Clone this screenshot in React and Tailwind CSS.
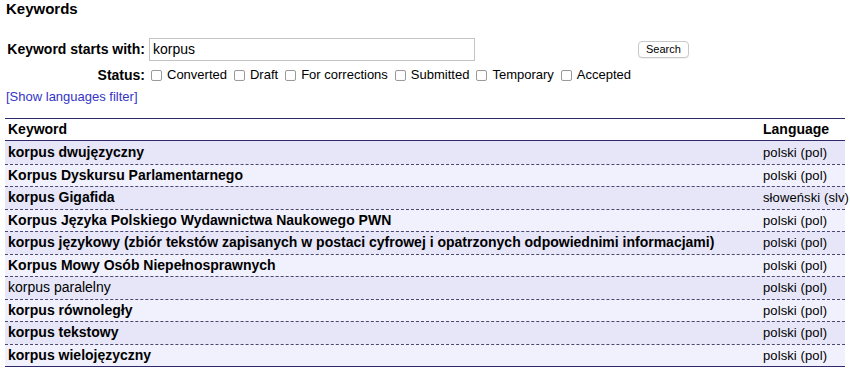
import React from 'react';

const statuses = ['Converted', 'Draft', 'For corrections', 'Submitted', 'Temporary', 'Accepted'];

const keywords = [
    { name: 'korpus dwujęzyczny', lang: 'polski (pol)', bold: true },
    { name: 'Korpus Dyskursu Parlamentarnego', lang: 'polski (pol)', bold: true },
    { name: 'korpus Gigafida', lang: 'słoweński (slv)', bold: true },
    { name: 'Korpus Języka Polskiego Wydawnictwa Naukowego PWN', lang: 'polski (pol)', bold: true },
    { name: 'korpus językowy (zbiór tekstów zapisanych w postaci cyfrowej i opatrzonych odpowiednimi informacjami)', lang: 'polski (pol)', bold: true },
    { name: 'Korpus Mowy Osób Niepełnosprawnych', lang: 'polski (pol)', bold: true },
    { name: 'korpus paralelny', lang: 'polski (pol)', bold: false },
    { name: 'korpus równoległy', lang: 'polski (pol)', bold: true },
    { name: 'korpus tekstowy', lang: 'polski (pol)', bold: true },
    { name: 'korpus wielojęzyczny', lang: 'polski (pol)', bold: true },
];

const Box = () => (
    <span className="inline-block w-[11px] h-[11px] border border-[#9a9a9a] rounded-[2px] bg-white mr-[5px]" />
);

const App = () => {
    return (
        <div className="w-[850px] h-[369px] bg-white text-black font-['Liberation_Sans',Arial,sans-serif] overflow-hidden">
            <h1 className="text-[15px] font-bold leading-[18px] pl-[6px]">Keywords</h1>

            {/* Search form */}
            <div className="mt-[20px]">
                <div className="flex items-center h-[22px]">
                    <div className="w-[145px] text-right text-[14px] font-bold">Keyword starts with:</div>
                    <div className="ml-[4px] w-[326px] h-[23px] border border-[#c4c4c4] flex items-center px-[3px] text-[14px]">korpus</div>
                    <button className="ml-[163px] h-[17px] px-[7px] text-[11px] border border-[#c8c8c8] rounded-[4px] bg-white leading-none shadow-[0_1px_0_rgba(0,0,0,0.05)]">
                        Search
                    </button>
                </div>
                <div className="flex items-center h-[18px] mt-[6px]">
                    <div className="w-[145px] text-right text-[14px] font-bold">Status:</div>
                    <div className="ml-[6px] flex items-center text-[13px]">
                        {statuses.map((s) => (
                            <label key={s} className="flex items-center mr-[7px]">
                                <Box />
                                <span>{s}</span>
                            </label>
                        ))}
                    </div>
                </div>
            </div>

            <div className="mt-[5px] pl-[6px] text-[13px] text-[#3434c8] leading-[16px]">[Show languages filter]</div>

            {/* Results table */}
            <div className="mt-[13px] mx-[5px] border-t border-b border-[#2c2a6a]">
                <div className="flex items-center h-[22px] border-b border-[#2c2a6a] text-[14px] font-bold px-[3px]">
                    <div className="flex-1">Keyword</div>
                    <div className="w-[79px] whitespace-nowrap">Language</div>
                </div>
                {keywords.map((k, i) => (
                    <div
                        key={k.name}
                        className={`flex items-center h-[22.5px] text-[14px] px-[3px] ${i > 0 ? 'border-t border-dashed border-[#4a4870]' : ''} ${i % 2 === 0 ? 'bg-[#e6e6f8]' : 'bg-[#f1f1fd]'}`}
                    >
                        <div className={`flex-1 whitespace-nowrap ${k.bold ? 'font-bold' : ''}`}>{k.name}</div>
                        <div className="w-[79px] whitespace-nowrap text-[13px] tracking-[0.1px]">{k.lang}</div>
                    </div>
                ))}
            </div>
        </div>
    );
};

export default App;
